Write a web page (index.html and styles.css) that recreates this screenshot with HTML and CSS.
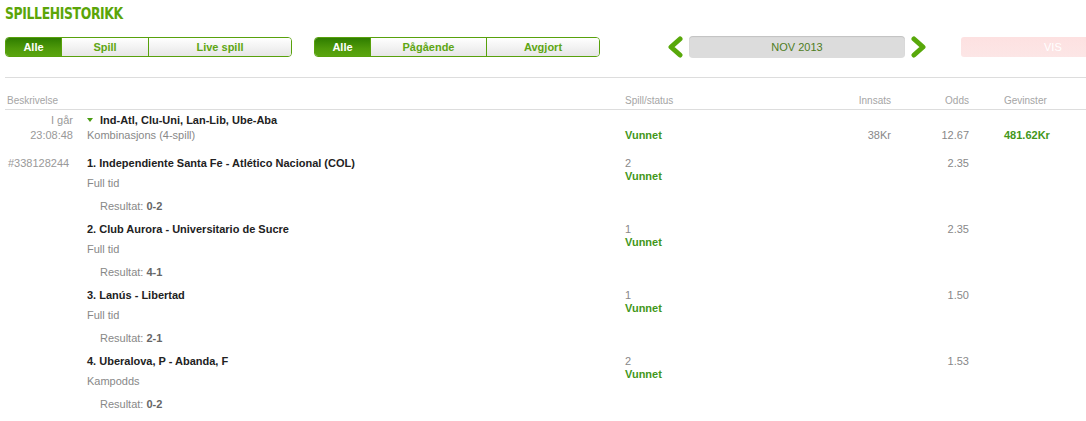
FILE: index.html
```html
<!DOCTYPE html>
<html lang="no">
<head>
    <meta charset="UTF-8">
    <title>Spillehistorikk</title>
    <link rel="stylesheet" href="styles.css">
</head>
<body>
    <div class="page">
        <div class="title-wrap"><h1 class="title">SPILLEHISTORIKK</h1></div>

        <!-- filters -->
        <div class="toolbar">
            <div class="seg">
                <button class="seg-btn active w56">Alle</button>
                <button class="seg-btn w87">Spill</button>
                <button class="seg-btn w144">Live spill</button>
            </div>
            <div class="seg seg-2">
                <button class="seg-btn active w56">Alle</button>
                <button class="seg-btn w116">Pågående</button>
                <button class="seg-btn w114">Avgjort</button>
            </div>
            <div class="month">
                <svg class="chev" width="17" height="22" viewBox="0 0 17 22"><polyline points="13,3 4,11 13,19" fill="none" stroke="#58a80a" stroke-width="5" stroke-linecap="round" stroke-linejoin="round"/></svg>
                <div class="month-box">NOV 2013</div>
                <svg class="chev" width="17" height="22" viewBox="0 0 17 22"><polyline points="4,3 13,11 4,19" fill="none" stroke="#58a80a" stroke-width="5" stroke-linecap="round" stroke-linejoin="round"/></svg>
            </div>
            <button class="vis">VIS</button>
        </div>

        <!-- history table -->
        <div class="table">
            <div class="row head">
                <div class="c-desc-all">Beskrivelse</div>
                <div class="c-status">Spill/status</div>
                <div class="c-num">Innsats</div>
                <div class="c-num">Odds</div>
                <div class="c-win">Gevinster</div>
            </div>

            <div class="row bet">
                <div class="c-date">I går<br>23:08:48</div>
                <div class="c-desc">
                    <div class="bet-title"><span class="tri"></span>Ind-Atl, Clu-Uni, Lan-Lib, Ube-Aba</div>
                    <div class="muted">Kombinasjons (4-spill)</div>
                </div>
                <div class="c-status"><br><span class="won">Vunnet</span></div>
                <div class="c-num"><br>38Kr</div>
                <div class="c-num"><br>12.67</div>
                <div class="c-win"><br><span class="won">481.62Kr</span></div>
            </div>

            <div class="row sel">
                <div class="c-date">#338128244</div>
                <div class="c-desc">
                    <div class="sel-name">1. Independiente Santa Fe - Atlético Nacional (COL)</div>
                    <div class="muted market">Full tid</div>
                    <div class="result">Resultat: <b>0-2</b></div>
                </div>
                <div class="c-status">2<br><span class="won">Vunnet</span></div>
                <div class="c-num"></div>
                <div class="c-num">2.35</div>
                <div class="c-win"></div>
            </div>

            <div class="row sel">
                <div class="c-date"></div>
                <div class="c-desc">
                    <div class="sel-name">2. Club Aurora - Universitario de Sucre</div>
                    <div class="muted market">Full tid</div>
                    <div class="result">Resultat: <b>4-1</b></div>
                </div>
                <div class="c-status">1<br><span class="won">Vunnet</span></div>
                <div class="c-num"></div>
                <div class="c-num">2.35</div>
                <div class="c-win"></div>
            </div>

            <div class="row sel">
                <div class="c-date"></div>
                <div class="c-desc">
                    <div class="sel-name">3. Lanús - Libertad</div>
                    <div class="muted market">Full tid</div>
                    <div class="result">Resultat: <b>2-1</b></div>
                </div>
                <div class="c-status">1<br><span class="won">Vunnet</span></div>
                <div class="c-num"></div>
                <div class="c-num">1.50</div>
                <div class="c-win"></div>
            </div>

            <div class="row sel">
                <div class="c-date"></div>
                <div class="c-desc">
                    <div class="sel-name">4. Uberalova, P - Abanda, F</div>
                    <div class="muted market">Kampodds</div>
                    <div class="result">Resultat: <b>0-2</b></div>
                </div>
                <div class="c-status">2<br><span class="won">Vunnet</span></div>
                <div class="c-num"></div>
                <div class="c-num">1.53</div>
                <div class="c-win"></div>
            </div>
        </div>
    </div>
</body>
</html>
```

FILE: styles.css
```css
* { margin: 0; padding: 0; box-sizing: border-box; }

body {
    font-family: 'Liberation Sans', Arial, sans-serif;
    font-size: 11px;
    color: #888;
    background: #fff;
    overflow: hidden;
}

.page {
    padding: 0 0 0 5px;
}

.title-wrap {
    height: 37px;
    padding-top: 5px;
}

.title {
    display: inline-block;
    font-family: 'DejaVu Sans Condensed', 'DejaVu Sans', sans-serif;
    font-stretch: condensed;
    font-weight: bold;
    font-size: 16px;
    line-height: 17px;
    letter-spacing: -0.4px;
    color: #5ba508;
    transform: scaleX(0.86);
    transform-origin: left center;
}

/* toolbar */
.toolbar {
    display: flex;
    align-items: center;
    height: 20px;
    white-space: nowrap;
    border-bottom: 1px solid #ddd;
    box-sizing: content-box;
    padding-bottom: 20px;
}

.toolbar > * { flex-shrink: 0; }

.seg {
    display: flex;
    height: 20px;
    border: 1px solid #58a10c;
    border-radius: 4px;
    overflow: hidden;
}

.seg-2 { margin-left: 22px; }

.seg-btn {
    flex-shrink: 0;
    height: 18px;
    border: none;
    border-left: 1px solid #58a10c;
    background: linear-gradient(#ffffff, #e6e6e6);
    color: #5ea613;
    font-family: inherit;
    font-weight: bold;
    font-size: 11px;
}

.seg-btn:first-child { border-left: none; }

.seg-btn.active {
    background: linear-gradient(#2f7d00, #4f9a0a 60%, #5aa50f);
    color: #fff;
}

.w56 { width: 55px; }
.w87 { width: 87px; }
.w144 { width: 143px; }
.w116 { width: 116px; }
.w114 { width: 113px; }

.month {
    display: flex;
    align-items: center;
    gap: 5px;
    margin-left: 67px;
}

.chev { display: block; }

.month-box {
    width: 216px;
    height: 22px;
    line-height: 22px;
    background: #dcdcdc;
    border-radius: 4px;
    box-shadow: inset 0 1px 1px rgba(0, 0, 0, 0.12);
    text-align: center;
    color: #4f7d23;
    font-size: 11px;
}

/* button runs on past the window edge, only its left part shows */
.vis {
    margin-left: 34px;
    width: 125px;
    height: 20px;
    border: none;
    border-radius: 3px 0 0 3px;
    background: linear-gradient(#fde1e1, #fce6e6);
    color: #fff;
    font-family: inherit;
    font-size: 11px;
    text-align: left;
    padding-left: 83px;
}

/* table */
.table {
    padding-top: 16px;
}

.row {
    display: grid;
    grid-template-columns: 82px 538px 175px 91px 78px 117px;
}

.head {
    font-size: 10px;
    color: #a5a5a5;
    line-height: 14px;
    border-bottom: 1px solid #ddd;
    padding-bottom: 1px;
}

.head .c-desc-all { grid-column: 1 / 3; padding-left: 2px; }

.c-date {
    text-align: right;
    padding-right: 14px;
    color: #999;
}

.sel .c-date {
    text-align: left;
    padding-left: 3px;
    padding-right: 0;
}

.c-num { text-align: right; }
.c-win { padding-left: 35px; }

.bet {
    line-height: 15px;
    padding-top: 3px;
}

.bet-title {
    font-weight: bold;
    color: #222;
}

.tri {
    display: inline-block;
    width: 0;
    height: 0;
    border-left: 3px solid transparent;
    border-right: 3px solid transparent;
    border-top: 4px solid #4a9c12;
    margin: 0 7px 2px 0;
    vertical-align: middle;
}

.won {
    font-weight: bold;
    color: #43971a;
}

.c-status .won { line-height: 13px; }

.sel {
    line-height: 13px;
    padding-top: 14px;
}

.sel + .sel { padding-top: 10px; }

.sel-name {
    font-weight: bold;
    color: #222;
}

.market {
    margin-top: 7px;
}

.result {
    margin-top: 10px;
    padding-left: 13px;
    color: #888;
}

.result b { color: #666; }
```
